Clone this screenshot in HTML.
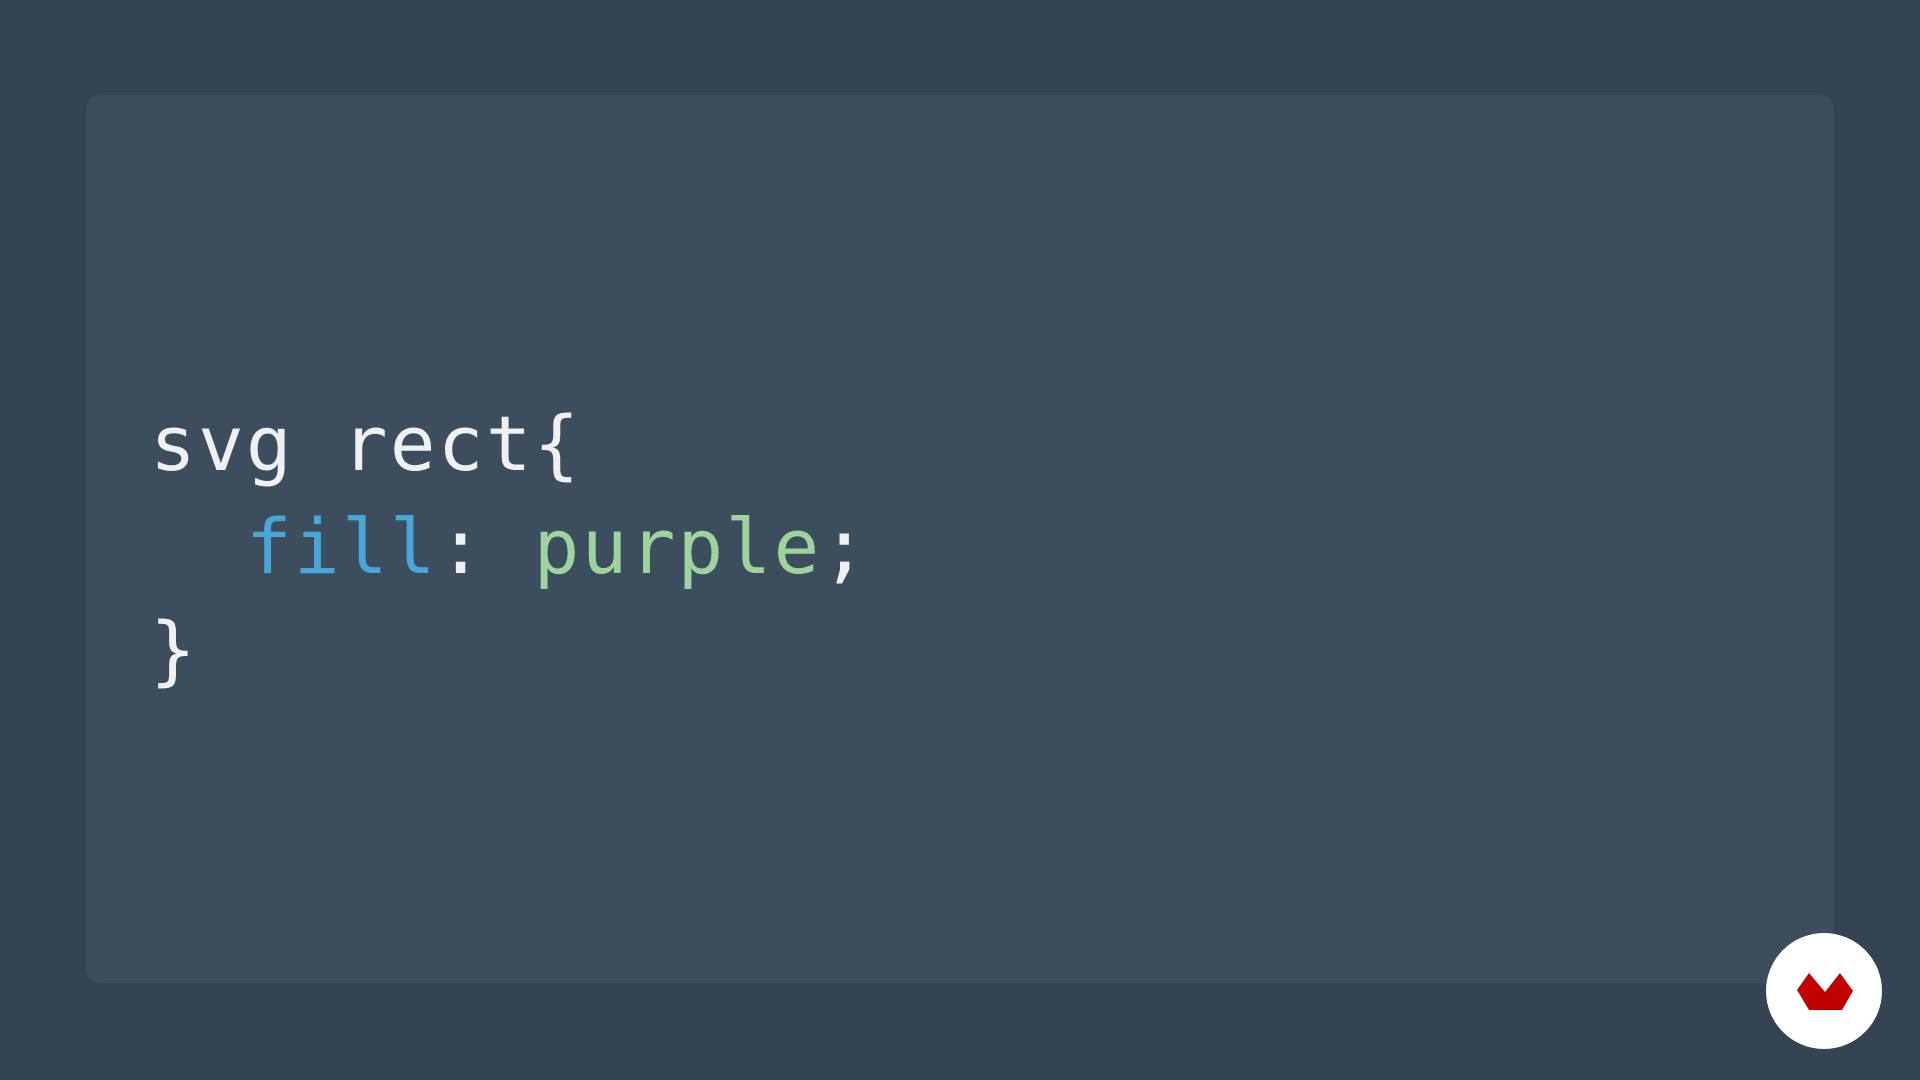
<!DOCTYPE html>
<html><head><meta charset="utf-8"><style>
html,body{margin:0;padding:0;width:1920px;height:1080px;overflow:hidden;background:#344454;}
.panel{position:absolute;left:86px;top:95px;width:1748px;height:888px;background:#3c4e5d;border-radius:14px;}
pre{position:absolute;left:150px;top:392px;margin:0;font-family:"DejaVu Sans Mono","Liberation Mono",monospace;font-size:76px;line-height:103px;color:#eef0f1;letter-spacing:2.2px;}
.b{color:#4aa6d6}.g{color:#9dd49b}
.logo{position:absolute;left:1766px;top:933px;width:116px;height:116px;border-radius:50%;background:#fff;}
</style></head><body>
<div class="panel"></div>
<pre>svg rect{
  <span class="b">fill</span>: <span class="g">purple</span>;
}</pre>
<div class="logo"></div>
<svg style="position:absolute;left:0;top:0" width="1920" height="1080"><polygon points="1797,990 1809,973 1825,992 1840,973 1853,991 1842,1010 1809,1010" fill="#c10000"/></svg>
</body></html>
